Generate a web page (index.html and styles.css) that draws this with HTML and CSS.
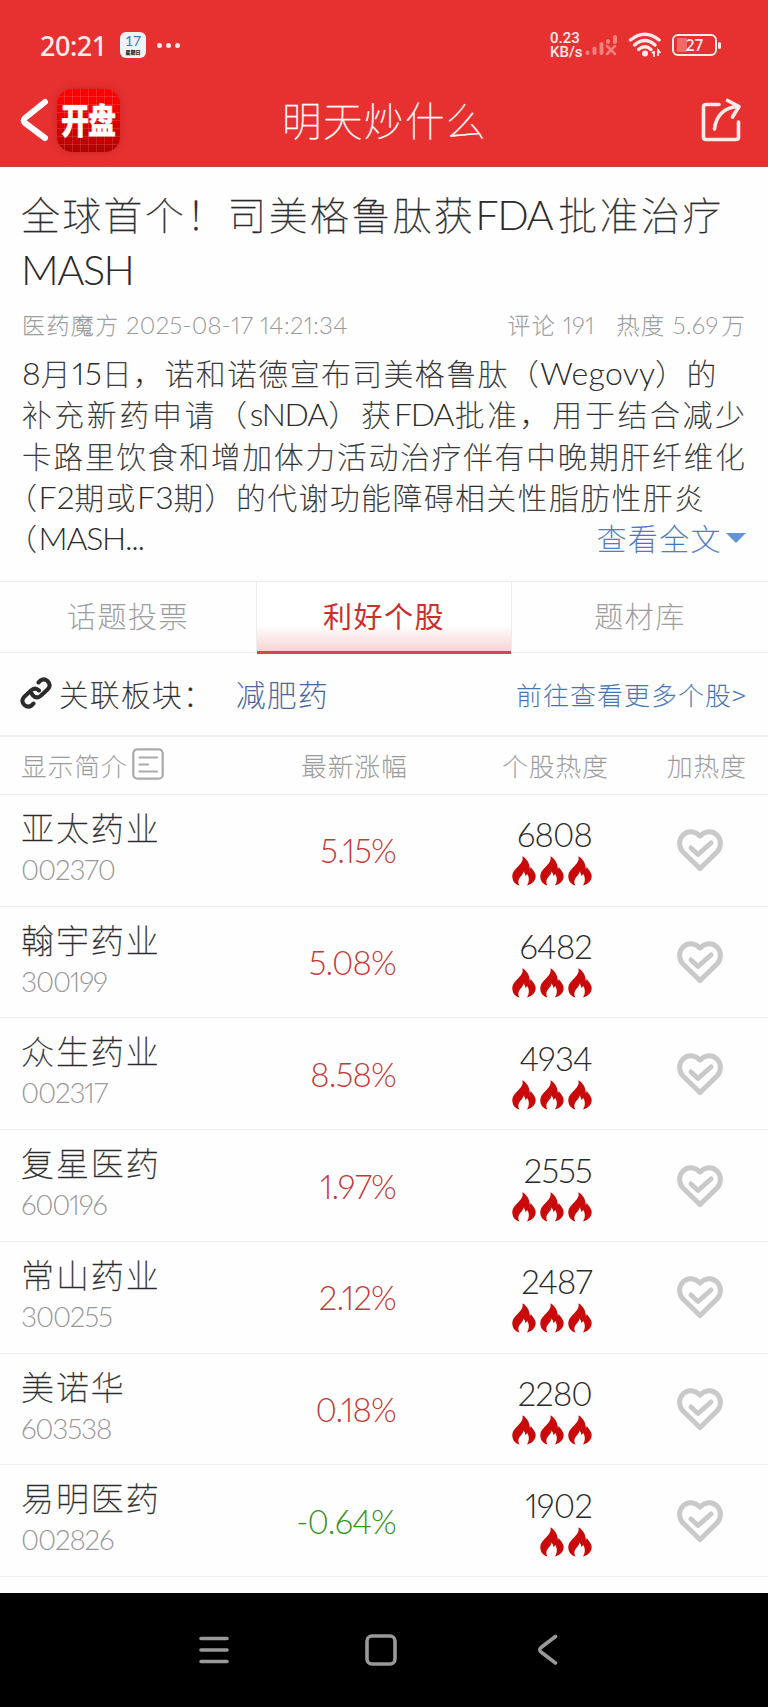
FILE: index.html
```html
<!DOCTYPE html>
<html lang="zh-CN">
<head>
    <meta charset="UTF-8">
    <meta name="viewport" content="width=device-width, initial-scale=1.0">
    <title>明天炒什么</title>
    <link rel="stylesheet" href="styles.css">
</head>
<body>
    <svg class="defs" width="0" height="0">
        <symbol id="fire" viewBox="0 0 24 30">
            <path d="M10.300 0.300C11.500 4 9.500 7 6.500 10C3 13.500 0.300 16 0.300 20.500C0.300 25 3 28 7.300 29.600C5.800 26.500 6 23.500 8.300 21C10 19.200 11.200 17.800 11.300 15.400C13 17 13.400 18.300 13.200 20C14.300 19.700 14.900 18.800 15.100 17.800C17.600 21.500 17.400 26 14.800 29.600C19.500 28.600 23.700 25 23.700 20.300C23.700 16.500 21.200 14.800 18.800 11C18.300 12 18.200 12.800 18 13.500C17.600 8 15.500 3 10.300 0.300Z" fill="#c80a0a"/>
        </symbol>
        <symbol id="heart" viewBox="0 0 48 44">
            <path d="M24 40.500L7 24C2.500 19.500 2.500 11.500 7 7C11.500 2.300 18.500 2.500 24 8C29.500 2.500 36.500 2.300 41 7C45.500 11.500 45.500 19.500 41 24Z" fill="none" stroke="#c9c9c9" stroke-width="5" stroke-linejoin="round"/>
            <path d="M15 20L22 26.500L35 15" fill="none" stroke="#c9c9c9" stroke-width="5" stroke-linecap="round" stroke-linejoin="round"/>
        </symbol>
    </svg>

    <header class="header">
        <div class="status">
            <span class="clock">20:21</span>
            <span class="calendar"><b>17</b><i>星期日</i></span>
            <span class="dots"><i></i><i></i><i></i></span>
            <span class="speed"><i>0.23</i><i>KB/s</i></span>
            <svg class="signal" width="32" height="22" viewBox="0 0 32 22">
                <g fill="none" stroke="#f3807d" stroke-width="4" stroke-linecap="round">
                    <path d="M2.500 18.500v0.500M9.500 14.500v4.500M16.500 10v9M23 7v1M30 3v5"/>
                    <path stroke-width="2.500" d="M22 12l8 8M30 12l-8 8"/>
                </g>
            </svg>
            <svg class="wifi" width="34" height="26" viewBox="0 0 34 26">
                <g fill="none" stroke="#fdeaea" stroke-width="3.400" stroke-linecap="round">
                    <path d="M2.500 8Q17 -3.500 31 8"/>
                    <path d="M6.500 13Q17 4 27 13"/>
                    <path d="M10.500 17.500Q17 12 23 17.500"/>
                </g>
                <circle cx="17" cy="21.500" r="3" fill="#fdeaea"/>
                <path d="M24 20l2 1.500v3.500M26 19v5M30 24v-6l2.500 3" fill="none" stroke="#fdeaea" stroke-width="1.800"/>
            </svg>
            <span class="battery">27</span>
        </div>
        <div class="bar">
            <svg class="back" width="30" height="44" viewBox="0 0 30 44">
                <path d="M26 4L6 20Q3.500 22.500 6 25L26 40" fill="none" stroke="#fff" stroke-width="6" stroke-linecap="round" stroke-linejoin="round"/>
            </svg>
            <span class="logo"><b>开盘</b></span>
            <h1>明天炒什么</h1>
            <svg class="share" width="42" height="44" viewBox="0 0 42 44">
                <g fill="none" stroke="#fdeaea" stroke-width="3.600" stroke-linecap="round" stroke-linejoin="round">
                    <path d="M19 6.500H6Q3.500 6.500 3.500 9V39Q3.500 41.500 6 41.500H36Q38.500 41.500 38.500 39V24"/>
                    <path d="M14.500 31C16 18 24 9 38.500 8.500"/>
                    <path d="M27.500 2.500L39 8.500L32.500 19"/>
                </g>
            </svg>
        </div>
    </header>

    <article class="news">
        <h2>
            <span>全球首个！司美格鲁肽获<em>FDA</em> 批准治疗</span>
            <span><em>MASH</em></span>
        </h2>
        <div class="meta">
            <span>医药魔方 <em>2025-08-17 14:21:34</em></span>
            <span class="right">评论 <em>191</em></span>
            <span>热度 <em class="hot">5.69</em>万</span>
        </div>
        <div class="content">
            <p><em>8</em>月<em>15</em>日，诺和诺德宣布司美格鲁肽（<em>Wegovy</em>）的</p>
            <p class="full">补充新药申请（<em>sNDA</em>）获<em>FDA</em>批准，用于结合减少</p>
            <p class="full">卡路里饮食和增加体力活动治疗伴有中晚期肝纤维化</p>
            <p><span class="half">（</span><em>F2</em>期或<em>F3</em>期）的代谢功能障碍相关性脂肪性肝炎</p>
            <p class="last">
                <span><span class="half">（</span><em>MASH...</em></span>
                <a class="more">查看全文</a>
            </p>
        </div>
    </article>

    <nav class="tabs">
        <a>话题投票</a>
        <a class="active">利好个股</a>
        <a>题材库</a>
    </nav>

    <div class="related">
        <svg width="32" height="32" viewBox="0 0 32 32">
            <g fill="none" stroke="#2b2b2b" stroke-width="4" stroke-linecap="round" stroke-linejoin="round">
                <path d="M18.500 5.500L20.500 3.500Q24 1 27.500 4Q31.500 8 28 12L20.500 19Q16.500 22 13 18.500Q12 17.500 11.800 16.500"/>
                <path d="M13.500 26.500L11.500 28.500Q8 31 4.500 28Q0.500 24 4 20L11.500 13Q15.500 10 19 13.500"/>
            </g>
        </svg>
        <span class="label">关联板块：</span>
        <a class="sector">减肥药</a>
        <a class="all">前往查看更多个股&gt;</a>
    </div>

    <div class="row head">
        <span class="intro">显示简介
            <svg width="32" height="32" viewBox="0 0 32 32">
                <g fill="none" stroke="#aaa" stroke-width="2.200" stroke-linecap="round">
                    <rect x="1.300" y="1.300" width="29.400" height="29.400" rx="4"/>
                    <path d="M7.500 9.500H25M7.500 16.500H16M7.500 23.500H25"/>
                </g>
            </svg>
        </span>
        <span>最新涨幅</span>
        <span>个股热度</span>
        <span>加热度</span>
    </div>

    <div class="row">
        <div class="stock"><b>亚太药业</b><i>002370</i></div>
        <div class="change">5.15%</div>
        <div class="heat">6808<div><svg><use href="#fire"/></svg><svg><use href="#fire"/></svg><svg><use href="#fire"/></svg></div></div>
        <svg class="like"><use href="#heart"/></svg>
    </div>
    <div class="row">
        <div class="stock"><b>翰宇药业</b><i>300199</i></div>
        <div class="change">5.08%</div>
        <div class="heat">6482<div><svg><use href="#fire"/></svg><svg><use href="#fire"/></svg><svg><use href="#fire"/></svg></div></div>
        <svg class="like"><use href="#heart"/></svg>
    </div>
    <div class="row">
        <div class="stock"><b>众生药业</b><i>002317</i></div>
        <div class="change">8.58%</div>
        <div class="heat">4934<div><svg><use href="#fire"/></svg><svg><use href="#fire"/></svg><svg><use href="#fire"/></svg></div></div>
        <svg class="like"><use href="#heart"/></svg>
    </div>
    <div class="row">
        <div class="stock"><b>复星医药</b><i>600196</i></div>
        <div class="change">1.97%</div>
        <div class="heat">2555<div><svg><use href="#fire"/></svg><svg><use href="#fire"/></svg><svg><use href="#fire"/></svg></div></div>
        <svg class="like"><use href="#heart"/></svg>
    </div>
    <div class="row">
        <div class="stock"><b>常山药业</b><i>300255</i></div>
        <div class="change">2.12%</div>
        <div class="heat">2487<div><svg><use href="#fire"/></svg><svg><use href="#fire"/></svg><svg><use href="#fire"/></svg></div></div>
        <svg class="like"><use href="#heart"/></svg>
    </div>
    <div class="row">
        <div class="stock"><b>美诺华</b><i>603538</i></div>
        <div class="change">0.18%</div>
        <div class="heat">2280<div><svg><use href="#fire"/></svg><svg><use href="#fire"/></svg><svg><use href="#fire"/></svg></div></div>
        <svg class="like"><use href="#heart"/></svg>
    </div>
    <div class="row">
        <div class="stock"><b>易明医药</b><i>002826</i></div>
        <div class="change down">-0.64%</div>
        <div class="heat">1902<div><svg><use href="#fire"/></svg><svg><use href="#fire"/></svg></div></div>
        <svg class="like"><use href="#heart"/></svg>
    </div>

    <footer class="system">
        <svg width="30" height="30" viewBox="0 0 30 30"><path d="M2 3.500H28M2 15H28M2 26.500H28"/></svg>
        <svg width="32" height="32" viewBox="0 0 32 32"><rect x="2" y="2" width="28" height="28" rx="5"/></svg>
        <svg width="22" height="32" viewBox="0 0 22 32"><path d="M18.500 2.500L4 13.500Q1.500 15.700 4 18L18.500 29"/></svg>
    </footer>
</body>
</html>
```
FILE: styles.css
```css
* {
    margin: 0;
    padding: 0;
    box-sizing: border-box;
}

body {
    width: 768px;
    height: 1707px;
    display: flex;
    flex-direction: column;
    overflow: hidden;
    background-color: #fefefe;
    color: #2b2b2b;
    font-family: "Noto Sans CJK SC", sans-serif;
    font-weight: 100;
    -webkit-text-stroke: 0.350px;
}
svg {
    flex: none;
}
em, i {
    font-style: normal;
}
em {
    font-family: Lato, sans-serif;
    font-weight: 300;
    font-feature-settings: "pnum";
    -webkit-text-stroke: 0;
}
.defs {
    position: absolute;
}

/* header */
.header {
    height: 167px;
    flex: none;
    background-color: #e73131;
    color: white;
    border-bottom: 1px solid #c04545;
}
.status {
    height: 76px;
    padding: 14px 51px 0 40px;
    display: flex;
    align-items: center;
    color: #fdeaea;
    -webkit-text-stroke: 0;
}
.clock {
    width: 80px;
    font: 500 27px "Noto Sans", sans-serif;
    letter-spacing: -0.500px;
}
.calendar {
    width: 26px;
    height: 26px;
    border-radius: 6px;
    background-color: #eef3f8;
    text-align: center;
    color: #3a7cc4;
}
.calendar b {
    display: block;
    font: 400 14px/16px Lato, sans-serif;
    padding-top: 1px;
}
.calendar i {
    display: block;
    font-size: 5px;
    line-height: 5px;
    font-weight: 900;
    color: #222;
}
.dots {
    display: flex;
    gap: 4px;
    margin-left: 11px;
}
.dots i {
    width: 5px;
    height: 5px;
    border-radius: 50%;
    background-color: #fdeaea;
}
.speed {
    margin-left: auto;
    width: 35px;
    display: grid;
    gap: 1px;
    font: 500 15px/13px Roboto, sans-serif;
    white-space: nowrap;
}
.wifi {
    margin-left: 11px;
}
.battery {
    position: relative;
    width: 45px;
    height: 22px;
    margin: 0 0 0 10px;
    border: 2px solid #fdeaea;
    border-radius: 6px;
    background: linear-gradient(#f06a6a, #f06a6a) 3px 2px / 10px 14px no-repeat;
    font: 600 15.500px/18px "Open Sans", sans-serif;
    text-align: center;
}
.battery::after {
    content: "";
    position: absolute;
    right: -6px;
    top: 6px;
    width: 3px;
    height: 7px;
    border-radius: 2px;
    background-color: #fdeaea;
}
.bar {
    height: 88px;
    padding: 0 26px 0 19px;
    display: flex;
    align-items: center;
}
.logo {
    width: 63px;
    height: 63px;
    margin-left: 8px;
    border-radius: 15px;
    background:
        repeating-linear-gradient(90deg, transparent 0 7px, #ffffff22 7px 8px),
        repeating-linear-gradient(transparent 0 7px, #ffffff22 7px 8px),
        linear-gradient(#f00 15%, #b00000);
    box-shadow: 0 0 8px #a0101066;
    font-size: 28px;
    line-height: 60px;
    text-align: center;
}
.logo b {
    display: block;
    margin-left: -1px;
    font-weight: 900;
    letter-spacing: -1px;
    transform: scaleY(1.250);
}
.bar h1 {
    flex: 1;
    margin-right: 51px;
    padding-bottom: 4px;
    font-size: 39.500px;
    font-weight: 100;
    letter-spacing: 1.500px;
    text-align: center;
}

/* news */
.news {
    height: 414px;
    flex: none;
    padding: 19px 22px 0;
}
.news h2 {
    margin-left: -1px;
    font-size: 38.800px;
    font-weight: 100;
    line-height: 55px;
    letter-spacing: 2.500px;
    word-spacing: -5px;
    white-space: nowrap;
}
.news h2 span {
    display: block;
}
.news h2 em {
    font-size: 41.500px;
    line-height: 1;
    letter-spacing: -1.500px;
}
.meta {
    display: flex;
    height: 55px;
    line-height: 57px;
    font-size: 23px;
    letter-spacing: 1.400px;
    color: #999;
    white-space: nowrap;
}
.meta em {
    font-size: 24px;
    line-height: 1;
    letter-spacing: 0.300px;
}
.meta .hot {
    margin: 0 3px 0 1px;
}
.meta .right {
    margin-left: auto;
    margin-right: 22px;
}
.content {
    padding-top: 1px;
    font-size: 29.500px;
    line-height: 41.300px;
    letter-spacing: 1.800px;
    white-space: nowrap;
}
.content em {
    font-size: 32px;
    line-height: 1;
    letter-spacing: 0;
}
.content p:first-child em {
    letter-spacing: 0.300px;
}
.content .full {
    white-space: normal;
    letter-spacing: 1.200px;
    text-align: justify;
    text-align-last: justify;
}
.content .full em, .content .last em {
    letter-spacing: -1.200px;
}
.half {
    font-feature-settings: "halt";
}
.last {
    display: flex;
    justify-content: space-between;
}
.more {
    display: flex;
    align-items: center;
    color: #3f76c2;
}
.more::after {
    content: "";
    margin-left: 4px;
    border: 10px solid transparent;
    border-top-color: #6295d4;
    border-bottom: 0;
}

/* tabs */
.tabs {
    height: 72px;
    flex: none;
    display: grid;
    grid-template-columns: repeat(3, 1fr);
    border-top: 1px solid #eee;
    border-bottom: 1px solid #eee;
    font-size: 29px;
    letter-spacing: 1.500px;
    line-height: 67px;
    text-align: center;
    color: #999;
}
.tabs .active {
    height: 72px;
    border: 1px solid #eee;
    border-width: 0 1px;
    box-shadow: inset 0 -3px #d04a47;
    background: linear-gradient(#fff 60%, #f6cfcf);
    font-weight: 400;
    -webkit-text-stroke: 0;
    color: #cf2d2a;
}

/* related sector */
.related {
    height: 84px;
    flex: none;
    display: flex;
    align-items: center;
    padding: 0 21px 2px 20px;
    border-bottom: 2px solid #eee;
    font-size: 29.500px;
    letter-spacing: 1.500px;
    white-space: nowrap;
}
.label {
    margin-left: 7px;
    width: 177px;
}
.sector {
    color: #3a5c9c;
}
.all {
    margin-left: auto;
    font-size: 25.500px;
    color: #3f70b4;
}

/* stock list */
.row {
    height: 111.740px;
    flex: none;
    display: grid;
    grid-template-columns: 187px 200px 201px 138px;
    align-items: center;
    padding: 0 21px;
    border-bottom: 1px solid #eee;
    text-align: right;
}
.head {
    height: 58px;
    padding-bottom: 3px;
    font-size: 25.500px;
    letter-spacing: 1.200px;
    color: #999;
}
.intro {
    display: flex;
    align-items: center;
    gap: 4px;
    text-align: left;
}
.stock {
    padding-bottom: 5px;
    text-align: left;
}
.stock b {
    display: block;
    font-size: 33px;
    font-weight: 100;
    line-height: 42px;
    letter-spacing: 1.900px;
}
.stock i, .change, .heat {
    -webkit-text-stroke: 0;
}
.stock i {
    display: block;
    font: 300 28px/42px Lato, sans-serif;
    font-feature-settings: "pnum";
    letter-spacing: -1.200px;
    color: #999;
}
.change {
    padding-right: 12px;
    font: 300 33px Lato, sans-serif;
    font-feature-settings: "pnum";
    letter-spacing: -0.800px;
    color: #c43a38;
}
.down {
    color: #349420;
}
.heat {
    padding-right: 17px;
    font: 300 33px/40px Lato, sans-serif;
    font-feature-settings: "pnum";
    letter-spacing: -0.800px;
}
.heat div {
    display: flex;
    justify-content: flex-end;
    gap: 4px;
    padding-top: 2px;
}
.heat svg {
    width: 24px;
    height: 30px;
}
.like {
    width: 48px;
    height: 44px;
    justify-self: end;
    margin-right: 23px;
}

/* system navigation */
.system {
    height: 114px;
    margin-top: auto;
    flex: none;
    display: flex;
    align-items: center;
    padding-left: 199px;
    background-color: black;
}
.system svg {
    fill: none;
    stroke: #999;
    stroke-width: 3.600;
    stroke-linecap: round;
}
.system svg + svg {
    margin-left: 136px;
}
.system svg:last-child {
    margin-left: 140px;
}
```
